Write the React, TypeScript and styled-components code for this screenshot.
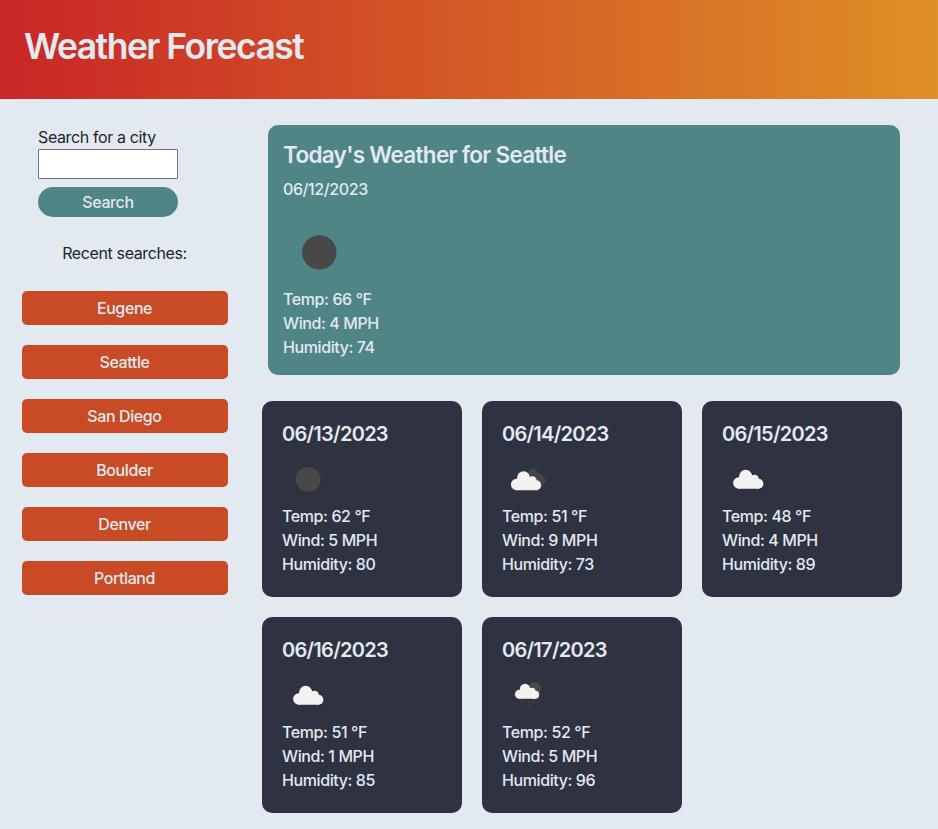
import React from "react";
import styled, { createGlobalStyle } from "styled-components";

const GlobalStyle = createGlobalStyle`
  *, *::before, *::after { box-sizing: border-box; }
  body {
    margin: 0;
    min-height: 100vh;
    background: #e2e9f1;
    color: #212529;
    font-family: Inter, "Liberation Sans", sans-serif;
    font-size: 16px;
    line-height: 24px;
    letter-spacing: -0.38px;
  }
  h1, h2, h3, p { margin: 0; }
`;

const Header = styled.header`
  height: 99px;
  padding: 22px 24px;
  background: linear-gradient(to right, #c92626, #df9026);
  color: #e2e9f1;
`;

const Title = styled.h1`
  font-size: 35.5px;
  line-height: 49px;
  font-weight: 570;
  letter-spacing: -1.52px;
`;

const Layout = styled.main`
  display: flex;
  align-items: flex-start;
`;

const Sidebar = styled.aside`
  width: 250px;
  flex: none;
  padding: 26px 22px 0;
`;

const SearchForm = styled.form`
  display: flex;
  flex-direction: column;
  width: 140px;
  margin-left: 16px;
`;

const SearchInput = styled.input`
  height: 30px;
  border: 1px solid #767676;
  border-radius: 1px;
  background: #fff;
  font: inherit;
`;

const LightText = `
  color: #e2e9f1;
  font: inherit;
  font-weight: 450;
  letter-spacing: -0.4px;
`;

const SearchButton = styled.button`
  height: 30px;
  margin-top: 8px;
  padding: 0;
  border: 0;
  border-radius: 15px;
  background: #4f8584;
  ${LightText}
`;

const RecentHeading = styled.p`
  width: 205px;
  margin-top: 24px;
  text-align: center;
`;

const RecentList = styled.div`
  display: flex;
  flex-direction: column;
  gap: 20px;
  width: 206px;
  margin-top: 26px;
`;

const CityButton = styled.button`
  height: 34px;
  padding: 0 1px 0 0;
  border: 0;
  border-radius: 5px;
  background: #c84b25;
  ${LightText}
`;

const Content = styled.section`
  flex: 1;
  padding: 26px 36px 0 12px;
`;

const TodayCard = styled.article`
  width: 632px;
  height: 250px;
  margin-left: 6px;
  padding: 16px 15px;
  border-radius: 10px;
  background: #4f8584;
  ${LightText}
`;

const TodayTitle = styled.h2`
  margin-bottom: 8px;
  font-size: 22.5px;
  line-height: 28px;
  font-weight: 580;
  letter-spacing: -0.69px;
`;

const Forecast = styled.div`
  display: grid;
  grid-template-columns: repeat(3, 200px);
  gap: 20px;
  margin-top: 26px;
`;

const DayCard = styled.article`
  height: 196px;
  padding: 21px 20px;
  border-radius: 10px;
  background: #2f3241;
  ${LightText}
`;

const DayTitle = styled.h3`
  font-size: 20px;
  line-height: 24px;
  font-weight: 590;
  letter-spacing: -0.73px;
`;

const Icon = styled.svg<{ $size: number; $top: number }>`
  display: block;
  width: ${(p) => p.$size}px;
  height: ${(p) => p.$size}px;
  margin: ${(p) => p.$top}px 0 -1px;
`;

type Sky = "clear" | "broken" | "cloudy" | "rain";

const Cloud = () => (
  <g>
    <circle cx="16.6" cy="31" r="5.7" />
    <circle cx="23.5" cy="24.3" r="6.5" />
    <circle cx="32.3" cy="27.2" r="4.4" />
    <circle cx="36.2" cy="31.7" r="5" />
    <path d="M16.6 25.3L34 26L37 36.7H16.6Z" />
  </g>
);

const WeatherIcon = ({ sky, large }: { sky: Sky; large?: boolean }) => (
  <Icon
    viewBox="0 0 52 52"
    $size={large ? 72 : 52}
    $top={large ? 15 : 7}
    aria-hidden
  >
    {sky === "clear" && <circle cx="26.2" cy="26.3" r="12.4" fill="#484848" />}
    {sky === "broken" && (
      <>
        <g fill="#444546">
          <circle cx="31" cy="20.6" r="4.8" />
          <circle cx="37.2" cy="23.7" r="3.5" />
          <circle cx="40" cy="27.7" r="3.7" />
          <path d="M29 24L37 20.2L43 30L36 31.4Z" />
        </g>
        <g fill="#f2f2f0" transform="translate(-2 .5)"><Cloud /></g>
      </>
    )}
    {sky === "cloudy" && <g fill="#f2f2f0" transform="translate(.2 -1)"><Cloud /></g>}
    {sky === "rain" && (
      <>
        <circle cx="32.4" cy="19.5" r="6.6" fill="#484848" />
        <g fill="#f2f2f0" transform="translate(4.2 .5) scale(.8)"><Cloud /></g>
        <path
          d="M19.8 32l-.8 1.5m4-1.5l-.7 1.2m5.2-1.2l-1 1.8m5-1.8l-.8 1.2M23.4 35l-.8 1.3m5.3-1.1l-.9 1.5"
          fill="none"
          stroke="#484a4d"
          strokeWidth="1.1"
          strokeLinecap="round"
        />
      </>
    )}
  </Icon>
);

interface Day { date: string; sky: Sky; temp: number; wind: number; humidity: number }

const Conditions = ({ temp, wind, humidity }: Omit<Day, "date" | "sky">) => (
  <>
    <p>{`Temp: ${temp} °F`}</p>
    <p>{`Wind: ${wind} MPH`}</p>
    <p>{`Humidity: ${humidity}`}</p>
  </>
);

const cities = ["Eugene", "Seattle", "San Diego", "Boulder", "Denver", "Portland"];

const days: Day[] = [
  { date: "06/13/2023", sky: "clear", temp: 62, wind: 5, humidity: 80 },
  { date: "06/14/2023", sky: "broken", temp: 51, wind: 9, humidity: 73 },
  { date: "06/15/2023", sky: "cloudy", temp: 48, wind: 4, humidity: 89 },
  { date: "06/16/2023", sky: "cloudy", temp: 51, wind: 1, humidity: 85 },
  { date: "06/17/2023", sky: "rain", temp: 52, wind: 5, humidity: 96 },
];

export default function App() {
  return (
    <>
      <GlobalStyle />
      <Header><Title>Weather Forecast</Title></Header>
      <Layout>
        <Sidebar>
          <SearchForm onSubmit={(e) => e.preventDefault()}>
            <label htmlFor="city">Search for a city</label>
            <SearchInput id="city" type="text" />
            <SearchButton type="submit">Search</SearchButton>
          </SearchForm>
          <RecentHeading>Recent searches:</RecentHeading>
          <RecentList>
            {cities.map((city) => <CityButton key={city}>{city}</CityButton>)}
          </RecentList>
        </Sidebar>
        <Content>
          <TodayCard>
            <TodayTitle>Today's Weather for Seattle</TodayTitle>
            <p>06/12/2023</p>
            <WeatherIcon sky="clear" large />
            <Conditions temp={66} wind={4} humidity={74} />
          </TodayCard>
          <Forecast>
            {days.map(({ date, sky, ...conditions }) => (
              <DayCard key={date}>
                <DayTitle>{date}</DayTitle>
                <WeatherIcon sky={sky} />
                <Conditions {...conditions} />
              </DayCard>
            ))}
          </Forecast>
        </Content>
      </Layout>
    </>
  );
}
